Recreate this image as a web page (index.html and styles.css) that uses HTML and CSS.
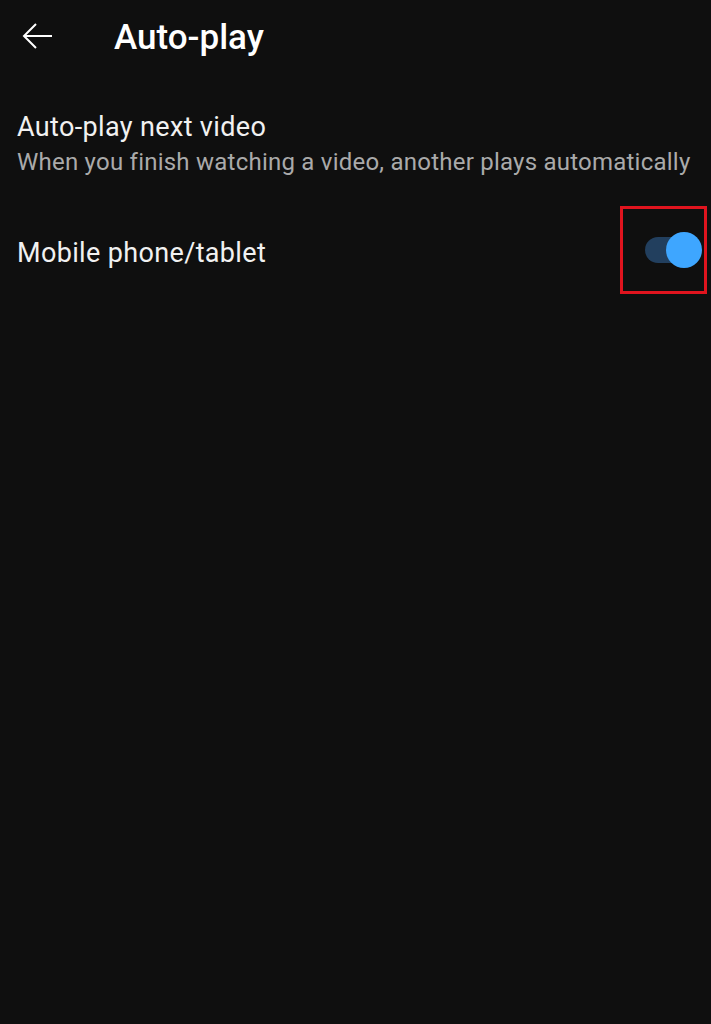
FILE: index.html
```html
<!DOCTYPE html>
<html>
<head>
<meta charset="utf-8">
<link rel="stylesheet" href="styles.css">
</head>
<body>
<header class="topbar">
  <button class="back" aria-label="Back">
    <svg width="32" height="28" viewBox="0 0 32 28"><path d="M31 14H3M15 2L3 14l12 12" fill="none" stroke="#fff" stroke-width="2"/></svg>
  </button>
  <h1 class="title">Auto-play</h1>
</header>
<main class="list">
  <div class="item">
    <div class="item-title">Auto-play next video</div>
    <div class="item-sub">When you finish watching a video, another plays automatically</div>
  </div>
  <div class="item row">
    <div class="item-title row-title">Mobile phone/tablet</div>
    <div class="toggle-wrap">
      <div class="toggle"><span class="track"></span><span class="thumb"></span></div>
    </div>
  </div>
</main>
</body>
</html>
```
FILE: styles.css
```css
html, body { margin: 0; padding: 0; background: #0f0f0f; height: 100%; }
body { font-family: Roboto, "Noto Sans", sans-serif; color: #f1f1f1; }
.topbar { display: flex; align-items: center; height: 76px; padding-left: 21px; }
.back { background: none; border: 0; padding: 0; width: 32px; height: 28px; display: flex; margin-top: -4px; }
.title { margin: -2px 0 0 61px; font-size: 35px; font-weight: 500; color: #fff; line-height: 1; }
.list { padding: 35px 4px 0 17px; }
.item-title { font-size: 27px; line-height: 32px; color: #f1f1f1; letter-spacing: 0.35px; }
.item-sub { font-size: 24px; line-height: 32px; color: #aaaaaa; letter-spacing: 0.23px; margin-top: 3px; }
.row { display: flex; align-items: center; justify-content: space-between; margin-top: 28px; }
.row-title { margin-top: 6px; }
.toggle-wrap { border: 3px solid #e0141e; width: 87px; height: 88px; display: flex; align-items: center; justify-content: flex-end; box-sizing: border-box; padding-right: 2px; }
.toggle { position: relative; width: 57px; height: 36px; }
.track { position: absolute; left: 0; top: 5px; width: 52px; height: 26px; border-radius: 13px; background: #223f5e; }
.thumb { position: absolute; right: 0; top: 0; width: 36px; height: 36px; border-radius: 50%; background: #3ea6ff; }
```
